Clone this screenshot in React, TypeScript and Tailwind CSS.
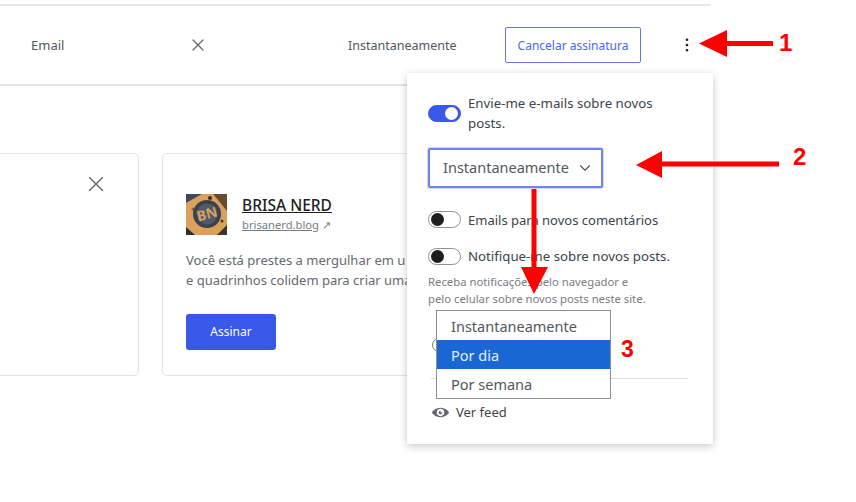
import React from 'react';
import { X, ChevronDown, EllipsisVertical } from 'lucide-react';

const Toggle = ({ on = false }: { on?: boolean }) => (
  <span
    className={`flex h-[17px] w-[33px] shrink-0 items-center rounded-full border px-[2px] ${
      on ? 'justify-end border-[#3858e9] bg-[#3858e9]' : 'justify-start border-[#8c8f94] bg-white'
    }`}
  >
    <span className={`block h-[13px] w-[13px] rounded-full ${on ? 'bg-white' : 'bg-[#1e1e1e]'}`} />
  </span>
);

const SiteAvatar = () => (
  <svg width="41" height="41" viewBox="0 0 41 41" className="shrink-0">
    <rect width="41" height="41" fill="#d9a15c" />
    <path d="M0 0H16L0 9Z" fill="#3d4a5c" />
    <path d="M27 0H41V17Z" fill="#6b4a33" />
    <path d="M0 33L9 41H0Z" fill="#2f2d30" />
    <path d="M31 41L41 31V41Z" fill="#3f3128" />
    <circle cx="24" cy="4" r="2" fill="#2f2d30" />
    <circle cx="36" cy="27" r="1.5" fill="#4a3a2c" />
    <circle cx="7" cy="15" r="1.5" fill="#8a6236" />
    <circle cx="21" cy="20" r="14" fill="#3b424c" />
    <circle cx="21" cy="20" r="10.5" fill="#505a68" />
    <text x="21" y="25" textAnchor="middle" fontSize="14" fontWeight="700" fill="#d9a15c" fontFamily="'Noto Sans', sans-serif" transform="rotate(-15 21 20)">
      BN
    </text>
  </svg>
);

export default function App() {
  return (
    <div className="relative h-[502px] w-[856px] overflow-hidden bg-white font-['Noto_Sans',sans-serif] text-[13px] text-[#50575e]">
      {/* subscription row */}
      <div className="mt-[4px] flex h-[82px] w-[711px] items-center border-y-2 border-t-[#e8e8e8] border-b-[#e4e4e4]">
        <span className="ml-[31px] w-[156.5px] pt-[2px]">Email</span>
        <X size={20} strokeWidth={1.5} className="text-[#646970]" />
        <span className="ml-[140.5px] w-[157px] pt-[2px] text-[12.5px]">Instantaneamente</span>
        <button className="h-[36px] w-[136px] rounded-[2px] border border-[#5f79ec] pt-[2px] text-[12px] text-[#4a68eb]">Cancelar assinatura</button>
        <EllipsisVertical size={18} strokeWidth={1.6} className="ml-[37px] text-[#1e1e1e]" />
      </div>

      {/* recommendation cards */}
      <div className="mt-[67px] flex gap-[23px]">
        <div className="-ml-[20px] flex h-[223px] w-[159px] shrink-0 justify-end rounded-[5px] border border-[#e4e4e4] pr-[29px] pt-[17px]">
          <X size={26} strokeWidth={1.3} className="text-[#646970]" />
        </div>
        <div className="h-[223px] w-[549px] shrink-0 overflow-hidden rounded-[5px] border border-[#e4e4e4] pl-[23px] pt-[40px]">
          <div className="flex items-center gap-[15px]">
            <SiteAvatar />
            <div>
              <div className="-mt-[2px] text-[15.5px] font-medium leading-[22px] text-[#1e1e1e] underline">BRISA NERD</div>
              <div className="text-[11.2px] leading-[17px] text-[#787c82]">
                <span className="underline">brisanerd.blog</span> ↗
              </div>
            </div>
          </div>
          <p className="mt-[15px] whitespace-nowrap leading-[20px] text-[#646970]">
            Você está prestes a mergulhar em u
            <br />e quadrinhos colidem para criar uma
          </p>
          <button className="mt-[24px] h-[36px] w-[90px] rounded-[3px] bg-[#3858e9] text-[12px] text-white">Assinar</button>
        </div>
      </div>

      {/* settings popover */}
      <div className="absolute left-[407px] top-[73px] h-[371px] w-[306px] bg-white px-[21px] pt-[20px] text-[#3c434a] shadow-[0_2px_8px_rgba(0,0,0,0.22)]">
        <div className="flex items-center gap-[7px] text-[13.25px] leading-[20px]">
          <Toggle on />
          <span>
            Envie-me e-mails sobre novos
            <br />
            posts.
          </span>
        </div>
        <div className="mt-[15px] flex h-[40px] w-[175px] items-center gap-[7px] rounded-[2px] border-2 border-[#6b84ee] pl-[13px] text-[14.5px] text-[#50575e] shadow-[0_0_0_1px_#d3daf9]">
          Instantaneamente
          <ChevronDown size={18} strokeWidth={1.5} />
        </div>
        <div className="mt-[20px] flex items-center gap-[7px] leading-[20px]">
          <Toggle />
          <span className="pt-[2px]">Emails para novos comentários</span>
        </div>
        <div className="mt-[16px] flex items-center gap-[7px] text-[13.25px] leading-[20px]">
          <Toggle />
          Notifique-me sobre novos posts.
        </div>
        <p className="mt-[7px] whitespace-nowrap text-[11.3px] leading-[17px] text-[#787c82]">
          Receba notificações pelo navegador e
          <br />
          pelo celular sobre novos posts neste site.
        </p>
        <div className="ml-[4px] mt-[31px] h-[14px] w-[14px] rounded-full border-[1.5px] border-[#787c82]" />
        <div className="ml-[3px] mr-[4px] mt-[26px] border-t border-[#dcdcde]" />
        <div className="ml-[4px] mt-[24px] flex items-center gap-[7px] leading-[18px]">
          {/* filled eye, no match in the icon packages */}
          <svg width="17" height="17" viewBox="0 0 20 20" fill="#646970">
            <path d="M10 4.4C3.439 4.4 0 9.232 0 10c0 .766 3.439 5.6 10 5.6 6.56 0 10-4.834 10-5.6 0-.768-3.44-5.6-10-5.6zm0 9.907c-2.455 0-4.445-1.928-4.445-4.307S7.545 5.691 10 5.691s4.444 1.93 4.444 4.309-1.989 4.307-4.444 4.307zM10 10c-.407-.447.663-2.154 0-2.154-1.228 0-2.223.965-2.223 2.154s.995 2.154 2.223 2.154c1.227 0 2.223-.965 2.223-2.154 0-.547-1.877.379-2.223 0z" />
          </svg>
          <span className="text-[#3c434a]">Ver feed</span>
        </div>
      </div>

      {/* native select list */}
      <div className="absolute left-[436px] top-[310px] w-[175px] border border-[#8c8f94] bg-white text-[14.5px] text-[#50575e]">
        <div className="h-[29px] pl-[14px] leading-[31px]">Instantaneamente</div>
        <div className="h-[29px] bg-[#1967d2] pl-[14px] leading-[31px] text-[#e8eefa]">Por dia</div>
        <div className="h-[29px] pl-[14px] leading-[31px]">Por semana</div>
      </div>

      {/* red annotations */}
      <svg className="absolute left-0 top-0" width="856" height="502" viewBox="0 0 856 502" fill="#f00" stroke="none">
        <rect x="725" y="41" width="48" height="5" />
        <path d="M699 43.5L727 30V57Z" />
        <rect x="660" y="161.5" width="119" height="5" />
        <path d="M636 165L662 151V178Z" />
        <rect x="531.5" y="189" width="5" height="80" />
        <path d="M534 294L521 267H548Z" />
      </svg>
      <span className="absolute left-[779px] top-[29px] font-['Liberation_Sans',sans-serif] text-[24px] font-bold leading-[28px] text-[#f00]">1</span>
      <span className="absolute left-[793px] top-[143px] font-['Liberation_Sans',sans-serif] text-[24px] font-bold leading-[28px] text-[#f00]">2</span>
      <span className="absolute left-[621px] top-[335px] font-['Liberation_Sans',sans-serif] text-[23px] font-bold leading-[28px] text-[#f00]">3</span>
    </div>
  );
}
